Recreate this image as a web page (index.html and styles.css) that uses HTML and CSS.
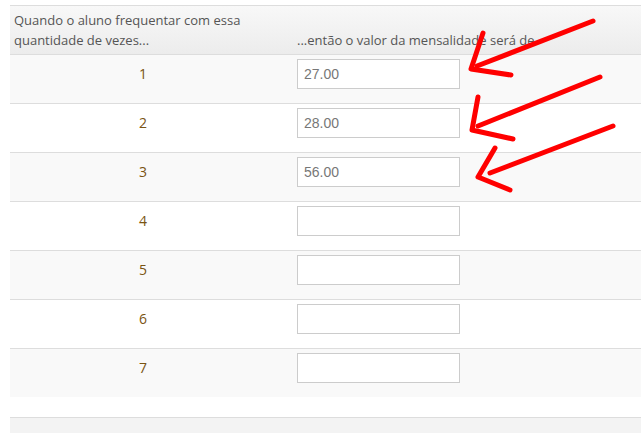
FILE: index.html
```html
<!DOCTYPE html>
<html lang="pt-BR">
<head>
<meta charset="utf-8">
<title>Mensalidades</title>
<link rel="stylesheet" href="styles.css">
</head>
<body>
<div class="page">
  <div class="table">
    <div class="row head">
      <div class="cell c1">Quando o aluno frequentar com essa quantidade de vezes...</div>
      <div class="cell c2">...então o valor da mensalidade será de</div>
    </div>
    <div class="row odd">
      <div class="cell c1 num">1</div>
      <div class="cell c2"><input class="field" type="text" value="27.00"></div>
    </div>
    <div class="row">
      <div class="cell c1 num">2</div>
      <div class="cell c2"><input class="field" type="text" value="28.00"></div>
    </div>
    <div class="row odd">
      <div class="cell c1 num">3</div>
      <div class="cell c2"><input class="field" type="text" value="56.00"></div>
    </div>
    <div class="row">
      <div class="cell c1 num">4</div>
      <div class="cell c2"><input class="field" type="text" value=""></div>
    </div>
    <div class="row odd">
      <div class="cell c1 num">5</div>
      <div class="cell c2"><input class="field" type="text" value=""></div>
    </div>
    <div class="row">
      <div class="cell c1 num">6</div>
      <div class="cell c2"><input class="field" type="text" value=""></div>
    </div>
    <div class="row odd">
      <div class="cell c1 num">7</div>
      <div class="cell c2"><input class="field" type="text" value=""></div>
    </div>
  </div>
  <div class="next-table"></div>
  <svg class="arrows" width="641" height="433" viewBox="0 0 641 433">
    <g fill="none" stroke="#ff0000" stroke-width="5" stroke-linecap="round" stroke-linejoin="round">
      <path d="M593 21 L477 66"/>
      <path d="M483 33 L471 69 L511 75"/>
      <path d="M600 77 L478 126"/>
      <path d="M478 97 L472 130 L513 139"/>
      <path d="M613 126 L490 173"/>
      <path d="M495 148 L478 177 L510 190"/>
    </g>
  </svg>
</div>
</body>
</html>
```
FILE: styles.css
```css
html, body {
  margin: 0;
  padding: 0;
  background: #fff;
}
body {
  font-family: "Open Sans", "Liberation Sans", sans-serif;
  font-size: 13px;
  color: #555;
}
.page {
  position: relative;
  width: 641px;
  height: 433px;
  overflow: hidden;
  padding: 5px 0 0 10px;
  box-sizing: border-box;
}
.table {
  display: flex;
  flex-direction: column;
}
.row {
  display: grid;
  grid-template-columns: 266px 1fr;
  border-top: 1px solid #dddddd;
  background: #fff;
  padding: 4px 0 14px 0;
}
.row.odd {
  background: #f9f9f9;
}
.row.head {
  background: linear-gradient(to bottom, #f8f8f8 0%, #ececec 100%);
  border-bottom: 1px solid #dddddd;
  line-height: 20px;
  padding: 4px 0;
}
.row.head + .row {
  border-top: 0;
}
.head .cell {
  align-self: end;
}
.cell {
  padding: 0 4px;
  align-self: center;
}
.c2 {
  padding-left: 21px;
}
.num {
  text-align: center;
  font-size: 14px;
  line-height: 20px;
  color: #7a5412;
  font-weight: 400;
}
.field {
  display: block;
  box-sizing: border-box;
  width: 163px;
  height: 30px;
  margin: 0;
  padding: 0 6px;
  border: 1px solid #cccccc;
  background: #fff;
  font-family: "Liberation Sans", Arial, sans-serif;
  font-size: 14px;
  color: #777;
}
.next-table {
  margin-top: 20px;
  height: 40px;
  border-top: 1px solid #dddddd;
  background: #f3f3f3;
}
.arrows {
  position: absolute;
  left: 0;
  top: 0;
  pointer-events: none;
}
```
